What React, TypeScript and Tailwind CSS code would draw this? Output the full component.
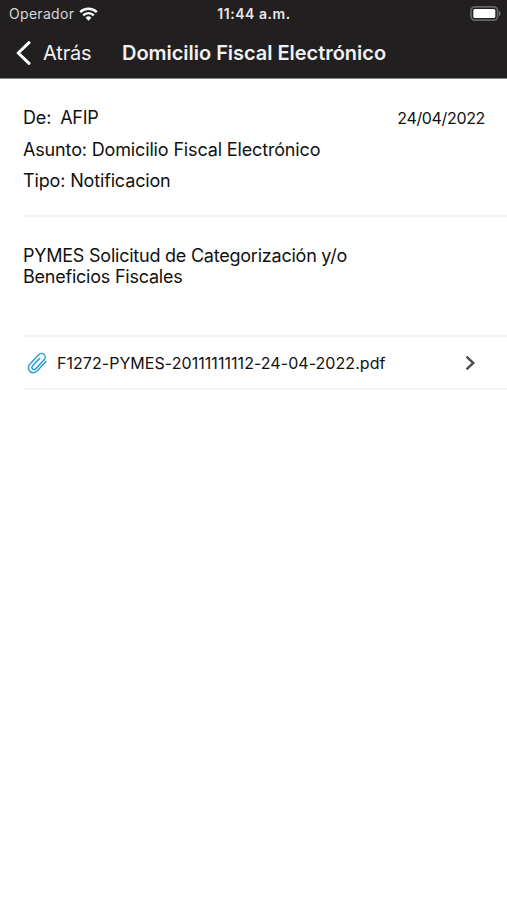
function StatusBar() {
  return (
    <div className="flex h-[27px] items-center justify-between pl-[9px] pr-[6px] text-[14px] leading-[18px]">
      <div className="flex w-[160px] items-center gap-[5px] text-[#d8d7d8]">
        <span className="tracking-[0.3px]">Operador</span>
        <svg width="19" height="14" viewBox="0 0 19 14" fill="none" stroke="#fff" strokeWidth="2.4">
          <path d="M1.2 5.1a11.8 11.8 0 0 1 16.6 0" />
          <path d="M4.2 8.3a7.5 7.5 0 0 1 10.6 0" />
          <path d="M9.5 13.7 6.6 10.8a4.1 4.1 0 0 1 5.8 0Z" fill="#fff" stroke="none" />
        </svg>
      </div>
      <span className="-ml-[2px] font-semibold tracking-[0.53px] text-[#e8e7e8]">11:44 a.m.</span>
      <div className="flex w-[160px] justify-end">
        <svg width="31" height="15" viewBox="0 0 31 15" fill="none">
          <rect x="1" y="0.8" width="26.6" height="13.4" rx="4" stroke="#666466" strokeWidth="1.7" />
          <rect x="3.3" y="3" width="22" height="9" rx="1.5" fill="#fff" />
          <path d="M29 5v5c2-.8 2-4.200 0-5Z" fill="#777577" />
        </svg>
      </div>
    </div>
  );
}

function NavBar() {
  return (
    <div className="flex h-[51px] items-center pl-[15px] leading-[26px] text-[#f2f1f2]">
      <svg width="16" height="24" viewBox="0 0 16 24" fill="none" stroke="#fff" strokeWidth="3" className="shrink-0">
        <path d="M14 1.700 3.200 12 14 22.300" strokeLinecap="round" strokeLinejoin="round" />
      </svg>
      <span className="ml-[12px] w-[79px] shrink-0 text-[20px] tracking-[-0.15px]">Atrás</span>
      <h1 className="whitespace-nowrap text-[20px] font-semibold tracking-[-0.03px]">Domicilio Fiscal Electrónico</h1>
    </div>
  );
}

function Paperclip() {
  return (
    <svg width="21" height="22" viewBox="0 0 21 22" fill="none" stroke="#2c9fd4" strokeWidth="1.5" strokeLinecap="round" strokeLinejoin="round">
      <path transform="translate(10.5 11) rotate(43)" d="M5.200 -6.800V6.200A5 5 0 0 1 -4.800 6.200V-7A3.700 3.700 0 0 1 2.600 -7V5.600A2.100 2.100 0 0 1 -1.600 5.600V-4.500" />
    </svg>
  );
}

export default function App() {
  return (
    <main className="h-[900px] w-full overflow-hidden bg-white font-['Inter','Liberation_Sans',sans-serif] text-[#111]">
      <header className="h-[79px] border-b border-[#858485] bg-[#211f20]">
        <StatusBar />
        <NavBar />
      </header>
      <section className="ml-[24px] h-[138px] border-b-2 border-[#f3f3f3] pt-[23px] text-[18px] leading-[32px] tracking-[-0.15px]">
        <div className="-ml-px flex h-[32px] items-center justify-between pr-[22px]">
          <p className="flex gap-[9px]">
            <span>De:</span>
            <span className="tracking-[-0.3px]">AFIP</span>
          </p>
          <time className="text-[16px] tracking-[-0.35px]">24/04/2022</time>
        </div>
        <p className="-ml-px">Asunto: Domicilio Fiscal Electrónico</p>
        <p className="-ml-px -mt-px">Tipo: Notificacion</p>
      </section>
      <section className="ml-[24px] h-[120px] border-b-2 border-[#f3f3f3] pt-[28px] text-[18px] leading-[22px]">
        <p className="-ml-px w-[360px] tracking-[-0.23px]">
          PYMES Solicitud de Categorización y/o
        </p>
        <p className="-ml-px -mt-px tracking-[-0.23px]">Beneficios Fiscales</p>
      </section>
      <button className="ml-[24px] flex h-[53px] w-[483px] items-center border-b-2 border-[#f3f3f3] pl-[3px] pr-[31px] text-left">
        <Paperclip />
        <span className="ml-[9px] flex-1 whitespace-nowrap text-[16px] tracking-[0.05px]">F1272-PYMES-20111111112-24-04-2022.pdf</span>
        <svg width="12" height="16" viewBox="0 0 12 16" fill="none" stroke="#505050" strokeWidth="2.500">
          <path d="m2.500 1.600 6.800 6.400-6.800 6.400" />
        </svg>
      </button>
    </main>
  );
}
